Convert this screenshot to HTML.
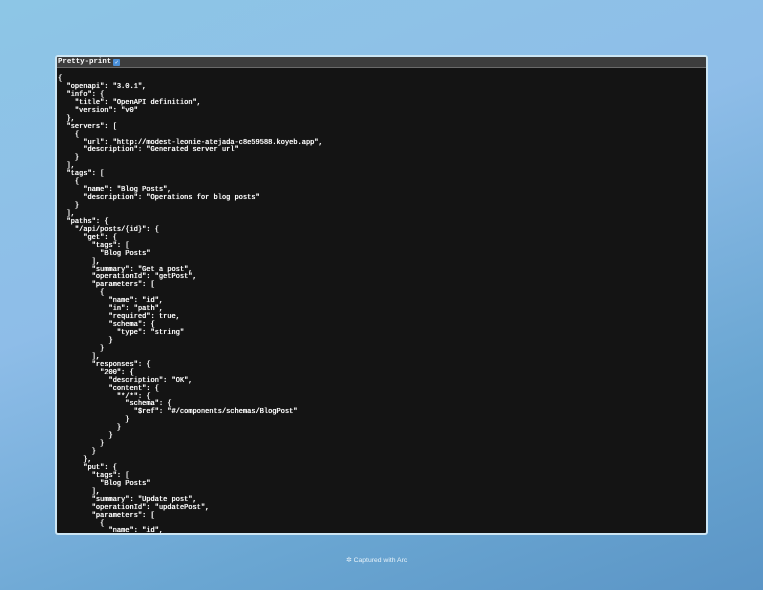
<!DOCTYPE html>
<html><head><meta charset="utf-8"><style>
html,body{margin:0;padding:0;}
body{width:763px;height:590px;overflow:hidden;position:relative;
background:linear-gradient(160deg,#8dc6e6 0%,#8ebde8 40%,#6aa6d2 75%,#5b95c6 100%);}
.frame{position:absolute;left:55px;top:55px;width:649px;height:476px;border:2px solid #cde6f4;border-radius:3px;background:#141414;overflow:hidden;}
.hdr{height:10px;background:#3d3d3d;border-bottom:1px solid #6a6a6a;font:bold 7.4px/10px "Liberation Mono",monospace;color:#fff;padding-left:1px;white-space:nowrap;}
.cb{display:inline-block;width:7px;height:7px;background:#4a8fd8;border-radius:1px;vertical-align:-1px;margin-left:2px;color:#fff;font-size:6px;line-height:7px;text-align:center;}
pre{margin:0;padding:8px 0 0 1px;font:7px/7.93px "Liberation Mono",monospace;color:#fafafa;text-shadow:0 0 0.4px #fff,0.3px 0 0 #ddd;}
.foot{position:absolute;left:346px;top:556px;font:6.8px "Liberation Sans",sans-serif;color:#e8f3fa;}
</style></head><body>
<div class="frame"><div class="hdr">Pretty-print<span class="cb">✓</span></div>
<pre>{
  "openapi": "3.0.1",
  "info": {
    "title": "OpenAPI definition",
    "version": "v0"
  },
  "servers": [
    {
      "url": "http://modest-leonie-atejada-c8e59588.koyeb.app",
      "description": "Generated server url"
    }
  ],
  "tags": [
    {
      "name": "Blog Posts",
      "description": "Operations for blog posts"
    }
  ],
  "paths": {
    "/api/posts/{id}": {
      "get": {
        "tags": [
          "Blog Posts"
        ],
        "summary": "Get a post",
        "operationId": "getPost",
        "parameters": [
          {
            "name": "id",
            "in": "path",
            "required": true,
            "schema": {
              "type": "string"
            }
          }
        ],
        "responses": {
          "200": {
            "description": "OK",
            "content": {
              "*/*": {
                "schema": {
                  "$ref": "#/components/schemas/BlogPost"
                }
              }
            }
          }
        }
      },
      "put": {
        "tags": [
          "Blog Posts"
        ],
        "summary": "Update post",
        "operationId": "updatePost",
        "parameters": [
          {
            "name": "id",
            "in": "path",
            "required": true,
</pre></div>
<div class="foot">✲ Captured with Arc</div>
</body></html>
